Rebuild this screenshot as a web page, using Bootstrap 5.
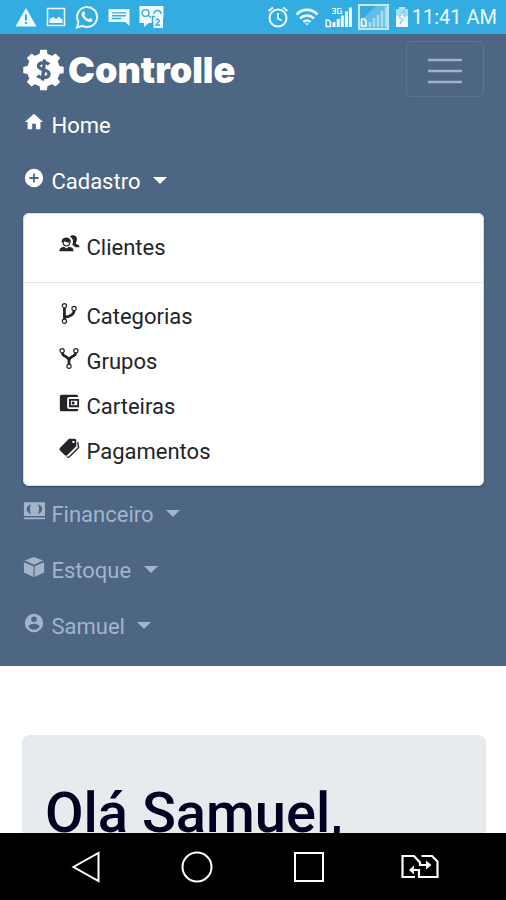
<!DOCTYPE html>
<html lang="pt-BR">
<head>
<meta charset="utf-8">
<meta name="viewport" content="width=device-width, initial-scale=1">
<title>Controlle</title>
<link href="https://cdn.jsdelivr.net/npm/bootstrap@5.3.0/dist/css/bootstrap.min.css" rel="stylesheet">
<style>
  body { font-family: Roboto, sans-serif; font-size: 22px; line-height: 34px; color: #000020; background: #fff; }
  .status-bar { height: 34px; padding: 0 9px 0 15px; background: #33ade1; color: #eefaff; font-size: 20px; }
  .status-group { gap: 9px; }
  .status-group.end-side { gap: 6px; }
  .app-nav { --bs-navbar-padding-y: 0; background: #4c6683; padding: 7px 22px 12px 23px; }
  .app-nav .navbar-brand { font-family: Inter, sans-serif; font-weight: 900; font-size: 36px; line-height: 54px; color: #fff; padding: 2px 0 0; margin: 0; gap: 4px; }
  .app-nav .navbar-toggler { padding: 10px 21px; line-height: 34px; border: 1px solid #5b7492; border-radius: 6px; color: #9fb3d1; }
  .app-nav .nav-link { padding: 12px 0 10px; line-height: 34px; color: #a3b4ca; text-align: left; }
  .app-nav .nav-link.active, .app-nav .nav-link.show { color: #fff; }
  .app-nav .dropdown-toggle::after { margin-left: 7px; border-width: 7px 7px 0; vertical-align: 5px; }
  .app-nav .dropdown-menu { --bs-dropdown-font-size: 22px; margin: 4px 0 0; padding: 11px 0; border: 1px solid #d5dde6; border-radius: 5px; box-shadow: 0 1px 2px #2c4a6d; }
  .app-nav .dropdown-item { padding: 5px 34px; line-height: 35px; color: #212529; }
  .app-nav .dropdown-divider { margin: 12px 0 11px; border-color: #e4e7ea; opacity: 1; }
  .glyph { width: 22px; height: 22px; margin-right: 1px; fill: currentColor; vertical-align: 0; }
  .page-area { padding: 69px 20px 0 22px; }
  .hero { background: #e8ebee; border-radius: 8px; padding: 44px 23px; height: 400px; }
  .hero h1 { font-size: 56px; font-weight: 500; line-height: 68px; margin: 0; color: #000020; }
  .system-keys { height: 67px; background: #000; padding: 0 58px; }
  .system-keys .btn { width: 56px; line-height: 0; color: #fff; border: 0; }
</style>
</head>
<body class="vh-100 d-flex flex-column overflow-hidden">

<header class="status-bar d-flex align-items-center justify-content-between flex-shrink-0">
  <div class="status-group d-flex align-items-center">
    <svg width="22" height="20" viewBox="0 0 22 20" fill="currentColor"><path fill-rule="evenodd" d="M11 1 21.500 19.500H.5ZM10 7.500V13.500H12V7.500ZM10 15V17H12V15Z"/></svg>
    <svg width="20" height="20" viewBox="0 0 20 20"><path d="M1.500 1.500H18.500V18.500H1.500Z" fill="none" stroke="currentColor" stroke-width="1.500"/><path d="M3.500 16V12L7 10 10 12 13 9.500 16.500 13V16Z" fill="currentColor"/></svg>
    <svg width="24" height="24" viewBox="0 0 24 24"><path d="M2 22.500 3.500 17A10 10 0 1 1 7.500 20.800Z" fill="none" stroke="currentColor" stroke-width="2"/><path d="M8 6.500C9 6 9.500 6.500 10.300 8.700L9.400 10.300C10.300 12.200 11.700 13.500 13.700 14.300L15 12.900C17.800 14 18 14.500 17.200 15.900 15.500 18.500 11 16.500 8.500 13.600 6.300 11 5.700 8.300 8 6.500Z" fill="currentColor"/></svg>
    <svg width="22" height="20" viewBox="0 0 22 20" fill="currentColor"><path fill-rule="evenodd" d="M.5 2H21.500V19L17 15H.5ZM4 5.200V6.600H18V5.200ZM4 8V9.400H18V8ZM4 10.800V12.200H13V10.800Z"/></svg>
    <svg width="25" height="24" viewBox="0 0 25 24"><path d="M.5 1H24.500V13H24V23H14.500V18H10L5 22V18H.5Z" fill="currentColor"/><g fill="none" stroke="#33ade1" stroke-width="1.400"><circle cx="6.500" cy="8" r="3.400"/><path d="M9 10 12 12.500M15 9A3.500 3.500 0 0 1 22 9M13.500 19V11.500H16M17 15.200C18 13.600 20.700 14.300 20.300 16L17 20H21"/></g></svg>
  </div>
  <div class="status-group end-side d-flex align-items-center">
    <svg width="22" height="24" viewBox="0 0 22 24" fill="none" stroke="currentColor" stroke-width="2"><circle cx="11" cy="13" r="8.500"/><path d="M11 8V13.500L14.500 15.500M1.500 6 6 2.500M20.500 6 16 2.500"/></svg>
    <svg width="24" height="20" viewBox="0 0 24 20" fill="none" stroke="currentColor" stroke-width="2.600"><path d="M1.500 7.500C7.500 1.300 16.500 1.300 22.500 7.500M5 11.500C9 7.500 15 7.500 19 11.500M8.500 15C10.500 13 13.500 13 15.500 15"/><path d="M10 16.300H14L12 18.500Z" fill="currentColor" stroke="none"/></svg>
    <svg width="27" height="24" viewBox="0 0 27 24" fill="none" stroke="currentColor"><path d="M1.200 15H3.500L5.500 17V21.500H1.200Z" stroke-width="1.500"/><path d="M9 22V17M13.200 22V14M17.300 22V10.500M21.400 22V6.500M25.400 22V2.500" stroke-width="3"/><path d="M7 3.500H10.500V8.500H7M8 6H10.500M16.500 3.500H12.800V8.500H16.500V6H15" stroke-width="1.200"/></svg>
    <svg width="31" height="26" viewBox="0 0 31 26"><path d="M1 1H30V25H1Z" fill="#62bee6" stroke="#c6e8e8" stroke-width="2"/><path d="M2 2H18L2 17Z" fill="#38a9dc"/><path d="M12 23V18M16 23V14M20 23V11M24 23V7M28 23V3" stroke="#a8dcf2" stroke-width="2.500"/><path d="M3.500 15H6L8 17V22H3.500Z" fill="none" stroke="#fff" stroke-width="1.500"/></svg>
    <div class="d-flex align-items-center"><svg width="17" height="22" viewBox="0 0 17 22"><path d="M4 1H10V4H4Z" fill="#bfe5f5"/><path d="M1 3H13V11H1Z" fill="#a7dcf2"/><path d="M1 10H13V21H1Z" fill="currentColor"/><path d="M9 4 4 12H7L5 18 11 10H8Z" fill="#fff" stroke="#72bfe2" stroke-width=".8"/></svg><time>11:41 AM</time></div>
  </div>
</header>

<main class="flex-grow-1 overflow-hidden">
  <nav class="navbar app-nav">
    <a class="navbar-brand d-flex align-items-center" href="#">
      <svg width="41" height="42" viewBox="0 0 41 42"><g fill="currentColor"><circle cx="20.500" cy="21" r="16.500"/><path id="tooth" d="M16.200 7 17.200.8H23.800L24.800 7V35L23.800 41.200H17.200L16.200 35Z"/><use href="#tooth" transform="rotate(45 20.500 21)"/><use href="#tooth" transform="rotate(90 20.500 21)"/><use href="#tooth" transform="rotate(135 20.500 21)"/></g><path d="M26 15.500C24 13 15.500 12.500 15.500 17 15.500 21.500 26 20 26 25 26 29.700 17 29.500 14.500 26.500M21.500 10.500 19.500 31.500" fill="none" stroke="#4c6683" stroke-width="3.400"/></svg>
      Controlle
    </a>
    <button class="navbar-toggler" type="button" data-bs-toggle="collapse" data-bs-target="#mainMenu" aria-controls="mainMenu" aria-expanded="true" aria-label="Menu">
      <svg width="34" height="26" viewBox="0 0 34 26" stroke="currentColor" stroke-width="2.600"><path d="M0 2H34M0 13H34M0 24H34"/></svg>
    </button>
    <div class="navbar-collapse collapse show" id="mainMenu">
      <ul class="navbar-nav">
        <li class="nav-item"><a class="nav-link active" href="#">
          <svg class="glyph" viewBox="0 0 24 24"><path d="M10 20V14H14V20H19V12H22L12 3 2 12H5V20Z"/></svg>
          Home</a></li>
        <li class="nav-item dropdown">
          <a class="nav-link dropdown-toggle show" href="#" role="button" data-bs-toggle="dropdown" aria-expanded="true">
            <svg class="glyph" viewBox="0 0 24 24"><path d="M17 13H13V17H11V13H7V11H11V7H13V11H17M12 2A10 10 0 0 0 2 12 10 10 0 0 0 12 22 10 10 0 0 0 22 12 10 10 0 0 0 12 2Z"/></svg>
            Cadastro
          </a>
          <ul class="dropdown-menu show">
            <li><a class="dropdown-item" href="#">
              <svg class="glyph" viewBox="0 0 24 24"><path d="M13 4C15 1.500 20 2 20.500 5.500 21 7 20.500 9 19.500 10.500V12C21.500 12.500 23.500 13.500 23.500 15.500H19C18 14 16.500 13.500 15.500 13 17 10 17 6 13 4Z"/><path d="M4 9C4 3.500 14 3.500 14 9L13.500 10.500C11 10.500 8 10 7 9L5.500 10.500H4.300Z"/><path d="M5.500 10C6 15.500 12.500 15.500 13 10" fill="none" stroke="currentColor" stroke-width="1.200"/><path d="M1.500 20C1.500 16.500 4 15.500 6.500 15L9.300 17 12 15C15 15.500 17 16.500 17 20Z"/></svg>
              Clientes</a></li>
            <li><hr class="dropdown-divider"></li>
            <li><a class="dropdown-item" href="#">
              <svg class="glyph" viewBox="0 0 24 24"><g fill="none" stroke="currentColor"><g stroke-width="1.300"><circle cx="7" cy="4" r="2.300"/><circle cx="17.500" cy="7" r="2.300"/><circle cx="7" cy="21" r="2.300"/></g><path d="M7 6.500V18.500M17.500 9.500C17.500 13.500 12.500 16 7.500 16.500" stroke-width="3"/></g></svg>
              Categorias</a></li>
            <li><a class="dropdown-item" href="#">
              <svg class="glyph" viewBox="0 0 24 24"><g fill="none" stroke="currentColor"><g stroke-width="1.300"><circle cx="4.500" cy="4" r="2.300"/><circle cx="19.500" cy="4" r="2.300"/><circle cx="12" cy="21" r="2.300"/></g><path d="M4.500 6.500C5 10.500 11.500 10 12 14.500 12.500 10 19 10.500 19.500 6.500M12 13V18.500" stroke-width="3"/></g></svg>
              Grupos</a></li>
            <li><a class="dropdown-item" href="#">
              <svg class="glyph" viewBox="0 0 24 24"><path fill-rule="evenodd" d="M4 3H20Q22 3 22 5V5.500H12Q10 5.500 10 7.500V16.500Q10 18.500 12 18.500H22V19Q22 21 20 21H4Q2 21 2 19V5Q2 3 4 3ZM12 7.500H23V16.500H12ZM14 9.500V14.500H21V9.500Z"/><circle cx="16.500" cy="12" r="1.700"/></svg>
              Carteiras</a></li>
            <li><a class="dropdown-item" href="#">
              <svg class="glyph" viewBox="0 0 24 24"><path fill-rule="evenodd" d="M12 2H18Q20 2 20 4V10L10 20Q8.500 21 7.500 20L2 14.500Q1 13 2 12ZM16.800 4A1.300 1.300 0 1 0 16.900 4Z"/><path d="M21.500 5.500 22.500 11.500 12.500 21.500Q11 22.500 9.500 21.500" fill="none" stroke="currentColor" stroke-width="1.500"/></svg>
              Pagamentos</a></li>
          </ul>
        </li>
        <li class="nav-item dropdown"><a class="nav-link dropdown-toggle" href="#" role="button" data-bs-toggle="dropdown" aria-expanded="false">
          <svg class="glyph" viewBox="0 0 24 24"><path fill-rule="evenodd" d="M1 2.500H24V17.500H1ZM6 6Q2 10 6 14L9 15.500Q6 10 9 4.500ZM19 6Q23 10 19 14L16 15.500Q19 10 16 4.500ZM1 19H24V21H1Z"/></svg>
          Financeiro
        </a></li>
        <li class="nav-item dropdown"><a class="nav-link dropdown-toggle" href="#" role="button" data-bs-toggle="dropdown" aria-expanded="false">
          <svg class="glyph" viewBox="0 0 24 24"><path d="M12 1 22 5 12 9.500 2 5ZM1 6.800 11.500 11.300V23L1 18ZM23 6.800 12.700 11.300V23L23 18Z"/></svg>
          Estoque
        </a></li>
        <li class="nav-item dropdown"><a class="nav-link dropdown-toggle" href="#" role="button" data-bs-toggle="dropdown" aria-expanded="false">
          <svg class="glyph" viewBox="0 0 24 24"><path d="M12 19.200C9.500 19.200 7.290 17.920 6 16 6.030 14 10 12.900 12 12.900S17.970 14 18 16C16.710 17.920 14.500 19.200 12 19.200M12 5A3 3 0 0 1 15 8 3 3 0 0 1 12 11 3 3 0 0 1 9 8 3 3 0 0 1 12 5M12 2A10 10 0 0 0 2 12 10 10 0 0 0 12 22 10 10 0 0 0 22 12 10 10 0 0 0 12 2Z"/></svg>
          Samuel
        </a></li>
      </ul>
    </div>
  </nav>
  <section class="page-area">
    <div class="hero"><h1>Olá Samuel,</h1></div>
  </section>
</main>

<footer class="system-keys d-flex align-items-center justify-content-between flex-shrink-0">
  <button class="btn p-0" type="button" aria-label="Voltar"><svg width="30" height="34" viewBox="0 0 30 34" fill="none" stroke="currentColor" stroke-width="2"><path d="M27.500 3V31L2.500 17Z"/></svg></button>
  <button class="btn p-0" type="button" aria-label="Início"><svg width="34" height="34" viewBox="0 0 34 34" fill="none" stroke="currentColor" stroke-width="2"><circle cx="17" cy="17" r="14.500"/></svg></button>
  <button class="btn p-0" type="button" aria-label="Recentes"><svg width="34" height="34" viewBox="0 0 34 34" fill="none" stroke="currentColor" stroke-width="2"><path d="M3 3H31V31H3Z"/></svg></button>
  <button class="btn p-0" type="button" aria-label="Trocar SIM"><svg width="38" height="28" viewBox="0 0 38 28" fill="none" stroke="currentColor" stroke-width="2.200"><path d="M14 24H1.500V3H13L19 9.500V12H28M20.500 3H31L36.500 8.500V24H18V17H10"/><path d="M25 7.500 30.500 12 25 16.500ZM13 12.500 8 17 13 21.500Z" fill="currentColor" stroke="none"/></svg></button>
</footer>

<script src="https://cdn.jsdelivr.net/npm/bootstrap@5.3.0/dist/js/bootstrap.bundle.min.js"></script>
</body>
</html>
